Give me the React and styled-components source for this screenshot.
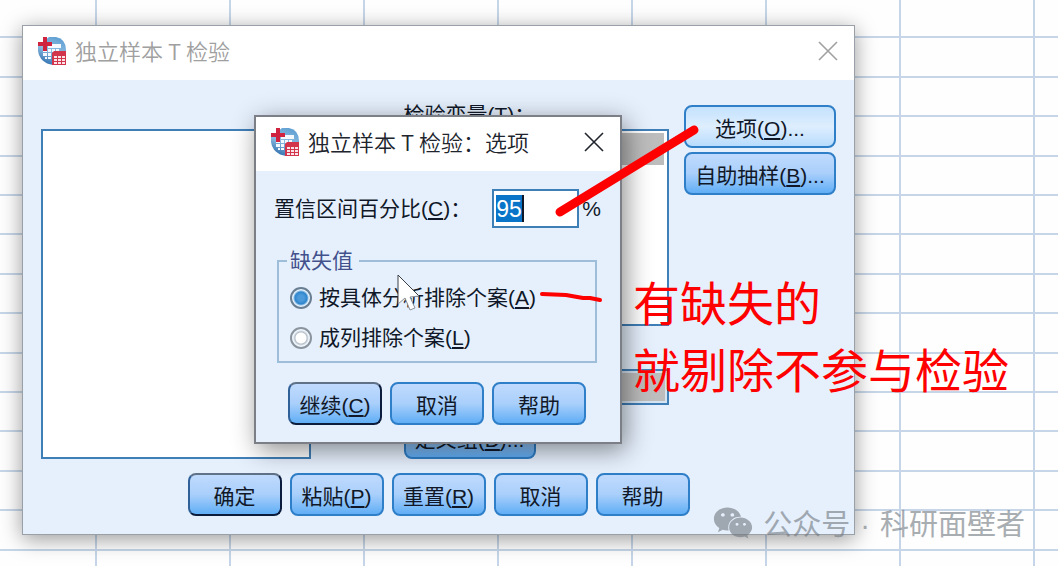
import React from 'react'
import styled, { createGlobalStyle } from 'styled-components'
import { FaWeixin } from 'react-icons/fa'

const SpssIcon = () => (
    <svg width="30" height="30" viewBox="0 0 30 30" aria-hidden="true">
        <defs>
            <linearGradient id="ball" x1="0.7" y1="0" x2="0.3" y2="1">
                <stop offset="0" stopColor="#5f9fd2" />
                <stop offset="0.5" stopColor="#8dbde2" />
                <stop offset="1" stopColor="#2f6fae" />
            </linearGradient>
        </defs>
        <path d="M12 1H19Q29 3 29 14V20L20 29H16Q3 27 1 15V10Z" fill="url(#ball)" />
        <path d="M11 8H24V12H11ZM6 13H10V16H6ZM11 13H14V16H11ZM15 13H18V16H15ZM19 13H22V15H19ZM6 17H10V20H6ZM11 17H14V20H11ZM8 21H10V23H8ZM11 21H14V23H11Z" fill="#f4f9ff" />
        <path d="M6 1H10V6H15V10H10V15H6V10H1V6H6Z" fill="#cf2340" />
        <path d="M17 15H29V29H15V17Z" fill="#d2344c" />
        <path d="M17 20H20V22H17ZM21 20H24V22H21ZM25 20H28V22H25ZM17 23H20V25H17ZM21 23H24V25H21ZM25 23H28V25H25ZM17 26H20V28H17ZM21 26H24V28H21ZM25 26H28V28H25Z" fill="#fbe4e8" />
    </svg>
)

const CloseIcon = () => (
    <svg width="20" height="20" viewBox="0 0 20 20" aria-hidden="true">
        <path d="M1 1L19 19M19 1L1 19" stroke="currentColor" strokeWidth="1.6" fill="none" />
    </svg>
)

const rows = Array.from({ length: 15 }, (_, i) => i)

const App = () => {
  return (
    <Desktop>
        <GlobalStyle />
        <Sheet>
            {rows.map((row) => <SheetRow key={row} />)}
        </Sheet>

        <Window $inactive>
            <TitleBar $inactive>
                <SpssIcon />
                <Title>独立样本 T 检验</Title>
                <CloseButton aria-label="关闭"><CloseIcon /></CloseButton>
            </TitleBar>
            <Body>
                <Columns>
                    <SourceList />
                    <Target>
                        <TargetLabel>检验变量(<u>T</u>)：</TargetLabel>
                        <TestList>
                            <Selected />
                        </TestList>
                        <GroupBox />
                        <DefineButton>定义组(<u>D</u>)...</DefineButton>
                    </Target>
                    <SideButtons>
                        <Button $light>选项(<u>O</u>)...</Button>
                        <Button>自助抽样(<u>B</u>)...</Button>
                    </SideButtons>
                </Columns>
                <Footer>
                    <Button $primary>确定</Button>
                    <Button>粘贴(<u>P</u>)</Button>
                    <Button>重置(<u>R</u>)</Button>
                    <Button>取消</Button>
                    <Button>帮助</Button>
                </Footer>
            </Body>
        </Window>

        <OptionsWindow>
            <TitleBar>
                <SpssIcon />
                <Title>独立样本 T 检验：选项</Title>
                <CloseButton aria-label="关闭"><CloseIcon /></CloseButton>
            </TitleBar>
            <OptionsBody>
                <Field>
                    <label htmlFor="confidence">置信区间百分比(<u>C</u>)：</label>
                    <NumberBox>
                        <NumberInput id="confidence" defaultValue="95" />
                    </NumberBox>
                    <span>%</span>
                </Field>
                <Missing>
                    <Legend>缺失值</Legend>
                    <Option>
                        <Radio name="missing" defaultChecked />
                        <span>按具体分析排除个案(<u>A</u>)</span>
                    </Option>
                    <Option>
                        <Radio name="missing" />
                        <span>成列排除个案(<u>L</u>)</span>
                    </Option>
                </Missing>
                <OptionsFooter>
                    <Button $primary>继续(<u>C</u>)</Button>
                    <Button>取消</Button>
                    <Button>帮助</Button>
                </OptionsFooter>
            </OptionsBody>
        </OptionsWindow>

        <Drawing width="1058" height="566" viewBox="0 0 1058 566" aria-hidden="true">
            <path d="M398 275V304L405 298L410 310L415 308L410 297L419 296Z" fill="#fff" />
            <path d="M398 304V275L419 296" fill="none" stroke="#3a4048" strokeWidth="1" />
            <path d="M398 304L405 298L410 310L415 308L410 297L419 296" fill="none" stroke="#8a9098" strokeWidth="1" />
            <path d="M560 212L694 130" stroke="#ff0000" strokeWidth="9" strokeLinecap="round" />
            <path d="M542 294L566 295L583 298L590 298L600 300" stroke="#ff0000" strokeWidth="4" strokeLinecap="round" strokeLinejoin="round" fill="none" />
        </Drawing>
        <Note>有缺失的<br />就剔除不参与检验</Note>
        <Watermark>
            <FaWeixin size={40} />
            <span>公众号</span>
            <span>·</span>
            <span>科研面壁者</span>
        </Watermark>
    </Desktop>
  )
}

const GlobalStyle = createGlobalStyle`
    * {
        box-sizing: border-box;
    }
    body {
        margin: 0;
        overflow: hidden;
    }
    body, button, input {
        font-family: "Liberation Sans", "Noto Sans CJK SC", sans-serif;
        font-size: 21px;
        line-height: 24px;
        color: #101828;
    }
    u {
        text-underline-offset: 2px;
        text-decoration-thickness: 2px;
    }
`

const Desktop = styled.main`
    position: relative;
    min-height: 100vh;
    padding: 25px 203px 32px 22px;
    overflow: hidden;
    background-color: #fefefe;
`

const Sheet = styled.div`
    position: absolute;
    inset: -1px 0 -23px 0;
    display: grid;
    grid-auto-rows: 1fr;
    background-image: linear-gradient(to right, #c6d6e8 2px, transparent 2px);
    background-size: 134px 100%;
    background-position: 95px 0;
`

const SheetRow = styled.div`
    border-bottom: 2px solid #c6d6e8;
`

const Window = styled.section`
    position: relative;
    border: 1px solid ${({ $inactive }) => ($inactive ? '#9aa0a8' : '#7c8086')};
    background-color: #e6f0fd;
    box-shadow: 0 4px 20px rgba(0, 0, 0, 0.4);
`

const OptionsWindow = styled(Window)`
    position: absolute;
    left: 254px;
    top: 115px;
    border-width: 2px;
    box-shadow: 4px 6px 24px rgba(0, 0, 0, 0.45);
`

const TitleBar = styled.header`
    display: flex;
    align-items: center;
    gap: 8px;
    height: 54px;
    padding: 0 16px 4px 14px;
    background-color: #fff;
    color: ${({ $inactive }) => ($inactive ? '#a0a0a0' : '#20242c')};
`

const Title = styled.h1`
    flex: 1;
    margin: 0;
    font-family: "Noto Sans CJK SC", sans-serif;
    font-size: 22px;
    font-weight: 350;
    line-height: 24px;
    padding-bottom: 2px;
    white-space: nowrap;
`

const CloseButton = styled.button`
    display: flex;
    padding: 0;
    border: none;
    background: none;
    color: inherit;
`

const Body = styled.div`
    padding: 25px 18px 18px 18px;
`

const Columns = styled.div`
    display: flex;
`

const SourceList = styled.div`
    flex: 1;
    margin: 24px 93px 0 0;
    border: 2px solid #3f7fb8;
    background-color: #fff;
`

const Target = styled.div`
    flex: 1;
    display: flex;
    flex-direction: column;
`

const TargetLabel = styled.span`
    line-height: 20px;
`

const TestList = styled.div`
    height: 197px;
    margin-top: 4px;
    padding: 2px 3px;
    border: 2px solid #3f7fb8;
    background-color: #fff;
`

const Selected = styled.div`
    height: 32px;
    background-color: #bdbdbd;
`

const GroupBox = styled.div`
    height: 36px;
    margin: 43px 0 11px;
    border: 2px solid #3f7fb8;
    background-color: #bdbdbd;
    box-shadow: inset 0 0 0 2px #d6e4f2;
`

const Button = styled.button`
    min-width: 94px;
    height: 43px;
    padding: 4px 8px 0;
    border: 2px solid #2f7fc8;
    border-color: ${({ $primary }) => ($primary ? '#5f7288 #0c1c3c #0c1c3c #2f6098' : '#2f7fc8')};
    border-radius: 8px;
    background-image: ${({ $light }) => ($light
        ? 'linear-gradient(#c4e2fd, #deeefe 50%, #b9dcfd)'
        : 'linear-gradient(#c0dafd, #a9cffb 50%, #60aef6)')};
    white-space: nowrap;
`

const DefineButton = styled(Button)`
    align-self: flex-start;
    width: 132px;
`

const SideButtons = styled.div`
    display: flex;
    flex-direction: column;
    gap: 4px;
    width: 152px;
    margin-left: 15px;
`

const Footer = styled.footer`
    display: flex;
    justify-content: center;
    gap: 8px;
    margin-top: 14px;
`

const OptionsFooter = styled(Footer)`
    margin-top: 19px;
    padding-right: 2px;
`

const OptionsBody = styled.div`
    padding: 18px 0 17px;
`

const Field = styled.div`
    display: flex;
    align-items: center;
    gap: 3px;
    padding: 0 19px 0 18px;

    label {
        flex: 1;
    }
`

const NumberBox = styled.span`
    display: flex;
    width: 87px;
    height: 39px;
    padding: 4px 2px;
    border: 2px solid #3f7fb8;
    background-color: #fff;
`

const NumberInput = styled.input`
    width: 28px;
    padding: 0;
    border: none;
    border-right: 2px solid #101828;
    outline: none;
    background-color: #0a74c8;
    font-size: 23px;
    color: #fff;
`

const Missing = styled.fieldset`
    min-width: 320px;
    margin: 21px 23px 0 21px;
    padding: 5px 12px 3px 8px;
    border: 2px solid #9dbdd8;
`

const Legend = styled.legend`
    padding: 0 6px 0 3px;
    color: #42508c;
`

const Option = styled.label`
    display: flex;
    align-items: center;
    gap: 7px;
    height: 40px;
    padding-left: 3px;
    white-space: nowrap;
`

const Radio = styled.input.attrs({ type: 'radio' })`
    appearance: none;
    width: 22px;
    height: 22px;
    margin: 0;
    border: 2px solid #8a949e;
    border-radius: 50%;
    background-image: radial-gradient(circle, #fff 5px, #b4bec8 6px, #f2f8fe 8px);

    &:checked {
        border-color: #6a7e92;
        background-image: radial-gradient(circle, #4d9ada 3px, #2f86cc 6px, #e4f2fe 8px);
    }
`

const Drawing = styled.svg`
    position: absolute;
    left: 0;
    top: 0;
    pointer-events: none;
`

const Note = styled.p`
    position: absolute;
    left: 633px;
    top: 267px;
    margin: 0;
    font-family: "Noto Sans CJK SC", sans-serif;
    font-size: 47px;
    line-height: 67px;
    color: #ff0000;
    white-space: nowrap;
`

const Watermark = styled.div`
    position: absolute;
    right: 33px;
    bottom: 24px;
    display: flex;
    align-items: flex-end;
    gap: 10px;
    font-size: 29px;
    line-height: 36px;
    color: #707880;
    opacity: 0.6;
    white-space: nowrap;
`

export default App
